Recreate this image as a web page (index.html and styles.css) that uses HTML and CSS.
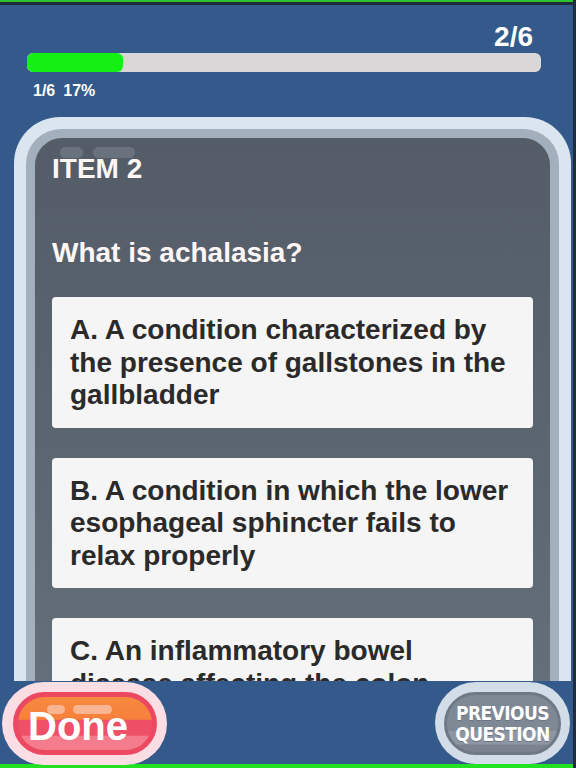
FILE: index.html
```html
<!DOCTYPE html>
<html lang="en">
<head>
<meta charset="utf-8">
<title>Quiz - Item 2</title>
<link rel="stylesheet" href="styles.css">
</head>
<body>
<div class="screen">
  <div class="topbar"></div>
  <div class="content">
    <header class="header">
      <div class="count">2/6</div>
      <div class="progress"><div class="fill" style="width:96px"></div></div>
      <div class="stats"><span>1/6</span><span>17%</span></div>
    </header>
    <section class="card">
      <div class="card-mid">
        <div class="panel">
          <div class="gloss"><span class="g1"></span><span class="g2"></span></div>
          <h2 class="item">ITEM 2</h2>
          <p class="question">What is achalasia?</p>
          <div class="answers">
            <div class="answer">A. A condition characterized by the presence of gallstones in the gallbladder</div>
            <div class="answer">B. A condition in which the lower esophageal sphincter fails to relax properly</div>
            <div class="answer">C. An inflammatory bowel disease affecting the colon</div>
          </div>
        </div>
      </div>
    </section>
  </div>
  <footer class="bottombar">
    <button class="btn-done">
      <span class="done-inner">
        <span class="done-gloss"><span class="dg1"></span><span class="dg2"></span></span>
        <span class="done-label">Done</span>
      </span>
    </button>
    <button class="btn-prev">
      <span class="prev-inner"><span class="prev-label">Previous<br>Question</span></span>
    </button>
  </footer>
  <div class="greenline"></div>
</div>
</body>
</html>
```
FILE: styles.css
```css
html, body {
  margin: 0;
  padding: 0;
}
body {
  width: 576px;
  height: 768px;
  overflow: hidden;
  background: #335a8b;
  font-family: "Liberation Sans", Arial, sans-serif;
}
.screen {
  width: 576px;
  height: 768px;
  display: flex;
  flex-direction: column;
  box-sizing: border-box;
  border-right: 3px solid #1f2d3e;
  background: #335a8b;
}
.topbar {
  height: 3px;
  border-top: 2px solid #2bc52b;
  background: #1d2b3b;
  flex: none;
}
.content {
  flex: 1;
  min-height: 0;
  overflow: hidden;
}
.header {
  padding: 16px 0 0 0;
}
.count {
  font-weight: bold;
  font-size: 28px;
  line-height: 32px;
  color: #ffffff;
  text-align: right;
  padding-right: 40px;
}
.progress {
  margin-left: 27px;
  width: 514px;
  height: 19px;
  border-radius: 6px;
  background: #d9d7d7;
  overflow: hidden;
}
.fill {
  height: 100%;
  border-radius: 6px;
  background: #14f014;
}
.stats {
  margin: 9px 0 0 33px;
  display: flex;
  gap: 8px;
  font-weight: bold;
  font-size: 16px;
  line-height: 20px;
  color: #ffffff;
}
.card {
  margin: 16px 0 0 14px;
  width: 557px;
  padding: 12px 12px 0 12px;
  box-sizing: border-box;
  background: #dbe5ef;
  border-radius: 46px 46px 0 0;
}
.card-mid {
  padding: 9px 9px 0 9px;
  background: #a3afbc;
  border-radius: 35px 35px 0 0;
}
.panel {
  position: relative;
  padding: 15px 17px 40px 17px;
  border-radius: 27px 27px 0 0;
  background: linear-gradient(to bottom, #535c67 0%, #5d6772 50%, #6b7581 100%);
  min-height: 640px;
}
.gloss {
  position: absolute;
  left: 25px;
  top: 9px;
  display: flex;
  gap: 10px;
}
.gloss span {
  display: block;
  height: 11px;
  border-radius: 6px;
  background: #69727d;
}
.gloss .g1 { width: 23px; }
.gloss .g2 { width: 42px; }
.item {
  margin: 0;
  font-size: 28px;
  line-height: 32px;
  font-weight: bold;
  color: #fff6f6;
}
.question {
  margin: 52px 0 0 0;
  font-size: 28px;
  line-height: 32px;
  font-weight: bold;
  color: #fff6f6;
}
.answers {
  margin-top: 28px;
  display: flex;
  flex-direction: column;
  gap: 30px;
}
.answer {
  background: #f5f5f5;
  border-radius: 4px;
  padding: 17px 18px 16px 18px;
  font-size: 28px;
  line-height: 32.5px;
  font-weight: bold;
  color: #2a2a2a;
}
.bottombar {
  flex: none;
  height: 83px;
  display: flex;
  justify-content: space-between;
  align-items: flex-start;
  padding: 1px 3px 0 2px;
  box-sizing: border-box;
  background: #335a8b;
  position: relative;
  z-index: 1;
}
button {
  font: inherit;
  border: none;
  margin: 0;
  cursor: pointer;
}
.btn-done {
  width: 165px;
  height: 83px;
  padding: 10px 10px 10px 11px;
  border-radius: 42px;
  background: #fbdde4;
  box-sizing: border-box;
  display: flex;
}
.done-inner {
  position: relative;
  flex: 1;
  display: flex;
  align-items: center;
  border: 5px solid #ec4862;
  border-radius: 32px;
  background: linear-gradient(to bottom, #f78a3e 0%, #f6803e 42%, #ef5068 44%, #ef5068 72%, #f47c8d 74%, #f47c8d 100%);
}
.done-gloss {
  position: absolute;
  left: 29px;
  top: 8px;
  display: flex;
  gap: 8px;
}
.done-gloss span {
  display: block;
  height: 9px;
  border-radius: 5px;
  background: #f9b592;
}
.done-gloss .dg1 { width: 18px; }
.done-gloss .dg2 { width: 39px; }
.done-label {
  position: relative;
  padding-left: 10px;
  font-size: 40px;
  line-height: 40px;
  font-weight: bold;
  color: #ffffff;
  margin-top: 4px;
}
.btn-prev {
  width: 135px;
  height: 82px;
  padding: 10px 9px 9px 9px;
  border-radius: 41px;
  background: #d3dde8;
  box-sizing: border-box;
  display: flex;
}
.prev-inner {
  flex: 1;
  display: flex;
  align-items: center;
  justify-content: center;
  border: 3px solid #6f7884;
  border-radius: 32px;
  background: linear-gradient(to bottom, #7f8895 0%, #7f8895 62%, #8d96a2 64%, #8d96a2 86%, #7a838f 88%);
}
.prev-label {
  font-family: "DejaVu Sans Condensed", "DejaVu Sans", sans-serif;
  font-stretch: condensed;
  font-weight: bold;
  font-size: 19px;
  line-height: 21px;
  letter-spacing: -0.6px;
  text-transform: uppercase;
  text-align: center;
  color: #ffffff;
  text-shadow: 0 1px 0 #6a7380;
}
.greenline {
  flex: none;
  height: 4px;
  background: #22e022;
}
```
